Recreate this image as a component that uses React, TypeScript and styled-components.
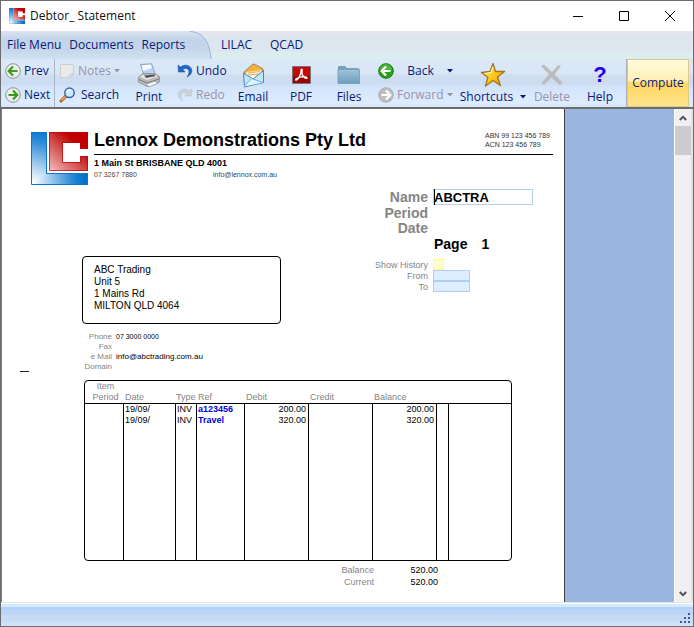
import React from "react";
import styled, { createGlobalStyle, css } from "styled-components";

const GlobalStyle = createGlobalStyle`
  *, *::before, *::after { box-sizing: border-box; }
  body { margin: 0; }
  button, input { font: inherit; color: inherit; margin: 0; padding: 0; border: 0; background: none; }
  svg { display: block; flex: none; }
`;

const ink = "#0a1a78";
const faded = "#9c93aa";
const label = "#858585";
const docFont = `"Liberation Sans", Arial, sans-serif`;

const Window = styled.div`
  display: flex;
  flex-direction: column;
  height: 100vh;
  border: 1px solid #6a6c70;
  background: #fff;
  color: ${ink};
  font: 12px/16px "Open Sans", "Noto Sans", sans-serif;
  overflow: hidden;
`;

const TitleBar = styled.header`
  display: flex;
  align-items: center;
  height: 30px;
  flex: none;
  padding-left: 8px;
  gap: 5px;
  color: #111;
`;

const WindowTitle = styled.h1`
  flex: 1;
  margin: 0;
  font-size: 12px;
  font-weight: 400;
`;

const CaptionButtons = styled.div`
  display: flex;
`;

const CaptionButton = styled.button`
  display: grid;
  place-items: center;
  width: 46px;
  height: 30px;
`;

const MenuBar = styled.nav`
  display: flex;
  height: 28px;
  flex: none;
  background: linear-gradient(#e4e6ef 0 6px, #dde5ef 7px 20px, #dbedee 22px);
`;

const ActiveTab = styled.div`
  display: flex;
  align-items: center;
  gap: 8px;
  padding-left: 6px;
  width: 189px;
  background: linear-gradient(#dce4f0, #c3d4e9 8px, #c5d6ea 18px, #d0e1f2);
`;

const OtherTabs = styled.div`
  display: flex;
  align-items: center;
  gap: 18px;
  padding-left: 9px;
`;

const MenuItem = styled.button`
  white-space: nowrap;
`;

const Toolbar = styled.div`
  display: flex;
  height: 48px;
  flex: none;
  background: linear-gradient(#dce8f8, #d8e6f6 14px, #cfddf0 17px, #ccdcf0 24px, #d3e4fb 28px, #ddecff 44px, #d5e6fa);
`;

const Stack = styled.div<{ $width: number; $inset?: number; $divided?: boolean }>`
  display: flex;
  flex-direction: column;
  flex: none;
  width: ${(p) => p.$width}px;
  padding-left: ${(p) => p.$inset ?? 4}px;
  ${(p) => p.$divided && css`border-right: 1px solid #a9b6ca;`}
`;

const RowButton = styled.button`
  display: flex;
  align-items: center;
  gap: 3px;
  height: 24px;
  white-space: nowrap;
  &:disabled { color: ${faded}; }
`;

const Caption = styled.span<{ $width: number }>`
  min-width: ${(p) => p.$width}px;
  text-align: center;
`;

const TallButton = styled.button<{ $width: number }>`
  display: flex;
  flex-direction: column;
  align-items: center;
  justify-content: space-between;
  flex: none;
  width: ${(p) => p.$width}px;
  padding: 3px 0 2px;
  white-space: nowrap;
  &:disabled { color: ${faded}; }
`;

const WithArrow = styled.span`
  display: flex;
  align-items: center;
  gap: 7px;
`;

const Compute = styled.button`
  margin-left: auto;
  margin-right: 4px;
  width: 62px;
  border: 1px solid #dcc98a;
  box-shadow: -1px 0 #a9b0bc;
  background: linear-gradient(#fffbdc, #fff0b4 21px, #ffd65e 23px, #ffe48c);
`;

const Workspace = styled.main`
  display: flex;
  flex: 1;
  min-height: 0;
  border-top: 2px solid #6d6d6d;
  border-left: 1px solid #77797c;
  background: #99b6e0;
`;

const Paper = styled.article`
  flex: 0 1 563px;
  border-right: 1px solid #404040;
  background: #fff;
  color: #000;
  font: 9px/11px ${docFont};
  overflow: hidden;
`;

const Letterhead = styled.section`
  display: flex;
  gap: 6px;
  margin: 22px 11px 0 29px;
`;

const LogoSlot = styled.div`
  padding-top: 1px;
`;

const LetterText = styled.div`
  flex: 1;
`;

const CompanyLine = styled.div`
  display: flex;
  justify-content: space-between;
  height: 24px;
  border-bottom: 1px solid #000;
`;

const Company = styled.h2`
  margin: 0;
  font-size: 18px;
  line-height: 18px;
  font-weight: 700;
  white-space: nowrap;
`;

const Registration = styled.p`
  margin: 0;
  width: 68px;
  font-size: 7px;
  line-height: 9px;
  color: #333;
  white-space: nowrap;
`;

const Street = styled.p`
  margin: 0;
  font-size: 9px;
  line-height: 16px;
  font-weight: 700;
`;

const SmallPair = styled.div`
  display: grid;
  grid-template-columns: 119px auto;
  font-size: 7px;
  line-height: 8px;
`;

const SmallNumber = styled.span`
  color: #5c4026;
`;

const MailLink = styled.a`
  color: #284b68;
  text-decoration: none;
`;

const Details = styled.section`
  display: grid;
  grid-template-columns: 199px 1fr;
  margin: 4px 0 0 80px;
`;

const AddressBox = styled.address`
  height: 68px;
  margin-top: 67px;
  padding: 7px 11px;
  border: 1px solid #000;
  border-radius: 4px;
  font-size: 10px;
  line-height: 12px;
  font-style: normal;
`;

const Fields = styled.div`
  display: grid;
  grid-template-columns: 147px 1fr;
  grid-template-rows: 16px 15px 16px 15px 8px repeat(3, 11px);
  column-gap: 5px;
  align-content: start;
`;

const BigLabel = styled.label`
  text-align: right;
  font-size: 14px;
  line-height: 17px;
  font-weight: 700;
  color: ${label};
`;

const SmallLabel = styled.label`
  text-align: right;
  line-height: 12px;
  color: ${label};
`;

const NameCell = styled.div`
  position: relative;
  width: 100px;
`;

const NameInput = styled.input`
  display: block;
  width: 100%;
  height: 16px;
  border: 1px solid #b4cdf5;
  font-size: 13px;
  line-height: 14px;
  font-weight: 700;
`;

const Caret = styled.span`
  position: absolute;
  left: 1px;
  top: 0;
  width: 1px;
  height: 16px;
  background: #000;
`;

const PageNumber = styled.div`
  grid-column: 2;
  display: flex;
  gap: 14px;
  padding-left: 1px;
  font-size: 14px;
  line-height: 16px;
  font-weight: 700;
`;

const Gap = styled.div`
  grid-column: 1 / -1;
`;

const HistoryBox = styled.input`
  appearance: none;
  width: 11px;
  height: 11px;
  border: 1px solid #ffff80;
  background: #ffffcc;
`;

const DateInput = styled.input`
  width: 37px;
  height: 11px;
  border: 1px solid #b0cdf8;
  background: #dceeff;
`;

const ContactRow = styled.section`
  display: flex;
  margin: 8px 0 0 18px;
`;

const FoldMark = styled.div`
  width: 9px;
  height: 1px;
  margin-top: 39px;
  background: #222;
`;

const ContactList = styled.dl`
  display: grid;
  grid-template-columns: 83px auto;
  grid-auto-rows: 10px;
  column-gap: 4px;
  margin: 0;
  font-size: 8px;
  line-height: 10px;
`;

const Term = styled.dt`
  text-align: right;
  color: ${label};
`;

const Value = styled.dd<{ $small?: boolean }>`
  margin: 0;
  font-size: ${(p) => (p.$small ? 7 : 8)}px;
`;

const Ledger = styled.div`
  margin: 8px 52px 0 82px;
  border: 1px solid #000;
  border-radius: 4px;
  overflow: hidden;
`;

const Table = styled.table`
  width: 100%;
  height: 179px;
  table-layout: fixed;
  border-spacing: 0;
  th, td { padding: 0 2px 0 1px; white-space: nowrap; vertical-align: top; line-height: 11px; }
  td + td { border-left: 1px solid #000; }
`;

const Head = styled.th<{ $center?: boolean }>`
  height: 23px;
  border-bottom: 1px solid #000;
  && { vertical-align: bottom; }
  text-align: ${(p) => (p.$center ? "center" : "left")};
  font-weight: 400;
  color: ${label};
`;

const HeadText = styled.span`
  padding-left: 1px;
`;

const FirstHeadText = styled.span`
  display: block;
  padding-left: 4px;
`;

const Cell = styled.td<{ $numeric?: boolean }>`
  height: 11px;
  text-align: ${(p) => (p.$numeric ? "right" : "left")};
`;

const RefLink = styled.a`
  color: #0000dc;
  font-weight: 700;
  text-decoration: none;
`;

const Totals = styled.dl`
  display: grid;
  grid-template-columns: 372px 64px;
  margin: 3px 0 0;
  line-height: 12px;
`;

const Total = styled.dd`
  margin: 0;
  text-align: right;
`;

const Scrollbar = styled.div`
  display: flex;
  flex-direction: column;
  width: 19px;
  margin-left: auto;
  border-left: 1px solid #fff;
  border-right: 2px solid #e3e3e3;
  background: #f0f0f0;
`;

const ScrollButton = styled.button`
  display: grid;
  place-items: center;
  height: 17px;
`;

const Thumb = styled.div`
  height: 29px;
  background: #cdcdcd;
`;

const Track = styled.div`
  flex: 1;
`;

const StatusBar = styled.footer`
  display: flex;
  justify-content: flex-end;
  align-items: flex-end;
  height: 24px;
  flex: none;
  border-top: 1px solid #e3e3e3;
  padding: 0 1px 1px;
  background: linear-gradient(#fff 0 1px, #d4e8ff 1px 4px, #b4d3f8 4px 7px, #bdd4f6 7px 12px, #c6dcf6 12px 17px, #d2e6f8);
`;

const Emblem = ({ width, height }: { width: number; height: number }) => (
  <svg width={width} height={height} viewBox="0 0 57 53" preserveAspectRatio="none" aria-hidden="true">
    <defs>
      <linearGradient id={`blueV${width}`} gradientUnits="userSpaceOnUse" x1="0" y1="50" x2="14" y2="0">
        <stop offset="0" stopColor="#fff" />
        <stop offset=".8" stopColor="#2a8ad8" />
        <stop offset="1" stopColor="#0876cf" />
      </linearGradient>
      <linearGradient id={`blueH${width}`} gradientUnits="userSpaceOnUse" x1="2" y1="50" x2="54" y2="44">
        <stop offset="0" stopColor="#fff" />
        <stop offset=".8" stopColor="#1d82d4" />
        <stop offset="1" stopColor="#0070cc" />
      </linearGradient>
      <linearGradient id={`red${width}`} x1="0" y1="1" x2=".8" y2=".1">
        <stop offset="0" stopColor="#f4c0c0" />
        <stop offset=".5" stopColor="#d35050" />
        <stop offset=".85" stopColor="#c00000" />
      </linearGradient>
    </defs>
    <path d="M0 0H16V41L0 53Z" fill={`url(#blueV${width})`} />
    <path d="M0 53L15.500 41H57V53Z" fill={`url(#blueH${width})`} />
    <path d="M.5.5H15.500V41.500H56.500V52.500H.5Z" fill="none" stroke="#0876cf" />
    <path d="M18 0H57V17H49V11H32V30H49V24H57V39H18Z" fill={`url(#red${width})`} />
    <path d="M18.500 .5H56.500V16.500H50V10.500H31.500V30.500H50V24.500H56.500V38.500H18.500Z" fill="none" stroke="#c00000" strokeOpacity=".7" />
  </svg>
);

const Disc = ({ kind }: { kind: "prev" | "next" | "back" | "forward" }) => {
  const solid = kind === "back" || kind === "forward";
  const flip = kind === "next" || kind === "forward";
  const fill = kind === "back" ? "#2ca01c" : kind === "forward" ? "#bdbdbd" : "#eceeee";
  const edge = kind === "back" ? "#16780e" : kind === "forward" ? "#adadad" : "#8e9494";
  return (
    <svg width="16" height="16" viewBox="0 0 16 16" aria-hidden="true">
      <circle cx="8" cy="8" r="7.300" fill={fill} stroke={edge} />
      {kind === "back" && <path d="M2 7a6 6 0 0 1 12 0Z" fill="#6cc850" opacity=".55" />}
      <g transform={flip ? "matrix(-1 0 0 1 16 0)" : undefined}>
        <path d="M8 3.500L3.700 8L8 12.500M4 8H12.500" fill="none" stroke={solid ? "#fff" : "#3d9a1c"} strokeWidth="2.200" />
      </g>
    </svg>
  );
};

const Arrow = ({ dim }: { dim?: boolean }) => (
  <svg width="6" height="4" viewBox="0 0 6 4" aria-hidden="true">
    <path d="M0 0H6L3 3.500Z" fill={dim ? faded : ink} />
  </svg>
);

const NoteIcon = () => (
  <svg width="16" height="16" viewBox="0 0 16 16" aria-hidden="true">
    <path d="M1.500 1.500H14.500V11L11 14.500H1.500Z" fill="#e9e9ea" stroke="#cfcfd2" />
    <path d="M14.500 11H11V14.500Z" fill="#f8f8f8" stroke="#c4c4c8" />
  </svg>
);

const SearchIcon = () => (
  <svg width="17" height="16" viewBox="0 0 17 16" aria-hidden="true">
    <path d="M7 9L2 14" stroke="#b87530" strokeWidth="3.200" strokeLinecap="round" />
    <path d="M7 9L2.500 13" stroke="#f0b060" strokeWidth="1.200" />
    <circle cx="10.500" cy="5.800" r="4.700" fill="#c6ecff" stroke="#3d62b0" strokeWidth="1.500" />
    <path d="M8 6Q8 3.300 11 3.200" fill="none" stroke="#fff" strokeWidth="1.500" />
  </svg>
);

const TurnIcon = ({ redo }: { redo?: boolean }) => (
  <svg width="16" height="16" viewBox="0 0 16 16" aria-hidden="true">
    <g transform={redo ? "matrix(-1 0 0 1 16 0)" : undefined} opacity={redo ? 0.8 : 1}>
      <path d="M1 2L1.500 9H8L5.800 6.500C8.500 4.500 11.500 5.500 12 8C12.300 10 11.500 12 10 14C14 12 15.500 9 14.500 6C13 2 7.500 1 3.500 4Z" fill={redo ? "#c7ccd2" : "#2368c8"} stroke={redo ? "#b8bec5" : "#1653ac"} strokeWidth=".6" />
    </g>
  </svg>
);

const PrintIcon = () => (
  <svg width="24" height="25" viewBox="0 0 24 25" aria-hidden="true">
    <path d="M3.500 1.500L14.500 .8L18.500 12H7Z" fill="#b9d4fa" stroke="#7b8fb0" strokeWidth=".8" />
    <path d="M4.500 2.300L13.800 1.600L15 5L6 8Z" fill="#f4faff" />
    <path d="M1.500 14L6 10.500H18L22.500 13.500V19L10 23.500L1.500 19Z" fill="#bdbdbd" stroke="#8b8b8b" strokeWidth=".8" />
    <path d="M2 14L6.500 11L8 13.500H17L17.500 11L22 13.500L10 17.500Z" fill="#e4e4e4" stroke="#999" strokeWidth=".5" />
    <path d="M7.500 12.500L17.500 11.500L18.500 13L9 15Z" fill="#545454" />
    <path d="M2 16.500L10 20L22 16" fill="none" stroke="#666" strokeWidth=".8" />
    <path d="M9 21L18 18L21 20L12 24Z" fill="#f8f8f8" stroke="#888" strokeWidth=".7" />
  </svg>
);

const EmailIcon = () => (
  <svg width="23" height="25" viewBox="0 0 23 25" aria-hidden="true">
    <path d="M2 9L11 1Q13 1 21 6L20.500 13L4 14Z" fill="#f5b13e" stroke="#a88248" />
    <path d="M4 9L19.500 7V15L4 17Z" fill="#fff7df" stroke="#e9bc62" strokeWidth=".5" />
    <path d="M6 10L18 8.500M6 12L17 11" stroke="#e4ad5b" />
    <path d="M1.500 10L11 16L21.500 7.500V19.500L2.500 24Z" fill="#bce7fc" stroke="#5e7ab0" />
    <path d="M2 23.500L9.500 15.500L21 19.500" fill="#d9f4ff" stroke="#62b0dd" />
  </svg>
);

const PdfIcon = () => (
  <svg width="19" height="18" viewBox="0 0 19 18" aria-hidden="true">
    <path d="M.5.5H18.500V17.500H.5Z" fill="#c80808" stroke="#777" />
    <path d="M1 10H18V17H1Z" fill="#9c0505" />
    <path d="M4 14C6 14 9.500 8 9 4.500C9 2.500 11 3 10 6C9.500 10 13 13 15 12.200C16 10 9 10 4.500 12.500C3.500 13 3.500 14 4 14" fill="none" stroke="#fff" strokeWidth="1.300" />
  </svg>
);

const FolderIcon = () => (
  <svg width="24" height="20" viewBox="0 0 24 20" aria-hidden="true">
    <defs>
      <linearGradient id="folder" x1="0" y1="0" x2="0" y2="1">
        <stop offset="0" stopColor="#a1c4da" />
        <stop offset="1" stopColor="#6a9dbd" />
      </linearGradient>
    </defs>
    <path d="M1 2Q1 1 2 1H8L10 3H21.500L22 5H1Z" fill="#7d9fb5" />
    <path d="M1 4.500H22.500V18.500H1Z" fill="url(#folder)" stroke="#7ba4bf" />
  </svg>
);

const StarIcon = () => (
  <svg width="26" height="26" viewBox="0 0 26 26" aria-hidden="true">
    <defs>
      <linearGradient id="star" x1="0" y1="0" x2="1" y2="1">
        <stop offset="0" stopColor="#fff07c" />
        <stop offset=".55" stopColor="#fcc51b" />
        <stop offset="1" stopColor="#e38a00" />
      </linearGradient>
    </defs>
    <path d="M13 1.500L15.500 9.500L24.500 9.500L17.500 15L20.500 23.500L13 18.500L5.500 24L7.800 15.300L1.500 10.500L10 9.500Z" fill="url(#star)" stroke="#a5741c" strokeWidth="1.300" strokeLinejoin="round" />
    <path d="M12.800 4.500L11 10.500L4.500 11.500" fill="none" stroke="#fffbd0" />
  </svg>
);

const DeleteIcon = () => (
  <svg width="24" height="24" viewBox="0 0 24 24" aria-hidden="true">
    <path d="M1 3L4 1.500L12 9L18.500 2L21 3L14.500 11.500L22.500 19.500L20 22.500L11.500 14.500L4 22L1.500 20L9 11.500Z" fill="#bcbcbc" />
  </svg>
);

const HelpMark = styled.span`
  font: 700 22px/26px ${docFont};
  color: #2000f0;
`;

const IconSlot = styled.span`
  display: grid;
  place-items: center;
  height: 26px;
`;

const Chevron = ({ down }: { down?: boolean }) => (
  <svg width="8" height="6" viewBox="0 0 8 6" aria-hidden="true">
    <path d={down ? "M.8 1L4 4.200L7.200 1" : "M.8 5L4 1.800L7.200 5"} fill="none" stroke="#505050" strokeWidth="1.900" />
  </svg>
);

const entries = [
  { date: "19/09/", type: "INV", ref: "a123456", debit: "200.00", balance: "200.00" },
  { date: "19/09/", type: "INV", ref: "Travel", debit: "320.00", balance: "320.00" },
];
const columns = [38, 52, 21, 48, 64, 64, 64, 12];

export default function App() {
  return (
    <>
      <GlobalStyle />
      <Window>
        <TitleBar>
          <Emblem width={16} height={16} />
          <WindowTitle>Debtor_ Statement</WindowTitle>
          <CaptionButtons>
            <CaptionButton aria-label="Minimize">
              <svg width="10" height="10"><path d="M0 5.500H10" stroke="#000" /></svg>
            </CaptionButton>
            <CaptionButton aria-label="Maximize">
              <svg width="10" height="10"><path d="M.5.5H9.500V9.500H.5Z" fill="none" stroke="#000" /></svg>
            </CaptionButton>
            <CaptionButton aria-label="Close">
              <svg width="10" height="10"><path d="M0 0L10 10M10 0L0 10" stroke="#000" /></svg>
            </CaptionButton>
          </CaptionButtons>
        </TitleBar>

        <MenuBar>
          <ActiveTab>
            <MenuItem>File Menu</MenuItem>
            <MenuItem>Documents</MenuItem>
            <MenuItem>Reports</MenuItem>
          </ActiveTab>
          <svg width="22" height="28" viewBox="0 0 22 28" aria-hidden="true">
            <defs>
              <linearGradient id="tab" x1="0" y1="0" x2="0" y2="1">
                <stop offset="0" stopColor="#dce4f0" />
                <stop offset=".29" stopColor="#c3d4e9" />
                <stop offset=".64" stopColor="#c5d6ea" />
                <stop offset="1" stopColor="#d0e1f2" />
              </linearGradient>
            </defs>
            <path d="M0 0C12 1 20 10 21 28H0Z" fill="url(#tab)" />
            <path d="M0 .5C12 1 20 10 21 28" fill="none" stroke="#94b5e0" />
          </svg>
          <OtherTabs>
            <MenuItem>LILAC</MenuItem>
            <MenuItem>QCAD</MenuItem>
          </OtherTabs>
        </MenuBar>

        <Toolbar>
          <Stack $width={54} $divided>
            <RowButton><Disc kind="prev" />Prev</RowButton>
            <RowButton><Disc kind="next" />Next</RowButton>
          </Stack>
          <Stack $width={77}>
            <RowButton disabled><NoteIcon />Notes<Arrow dim /></RowButton>
            <RowButton><SearchIcon /><Caption $width={42}>Search</Caption></RowButton>
          </Stack>
          <TallButton $width={34}><IconSlot><PrintIcon /></IconSlot>Print</TallButton>
          <Stack $width={68} $inset={11}>
            <RowButton><TurnIcon />Undo</RowButton>
            <RowButton disabled><TurnIcon redo />Redo</RowButton>
          </Stack>
          <TallButton $width={38}><IconSlot><EmailIcon /></IconSlot>Email</TallButton>
          <TallButton $width={58}><IconSlot><PdfIcon /></IconSlot>PDF</TallButton>
          <TallButton $width={38}><IconSlot><FolderIcon /></IconSlot>Files</TallButton>
          <Stack $width={90} $inset={10}>
            <RowButton><Disc kind="back" /><Caption $width={47}>Back</Caption><Arrow /></RowButton>
            <RowButton disabled><Disc kind="forward" />Forward<Arrow dim /></RowButton>
          </Stack>
          <TallButton $width={70}>
            <IconSlot><StarIcon /></IconSlot>
            <WithArrow>Shortcuts<Arrow /></WithArrow>
          </TallButton>
          <TallButton $width={48} disabled><IconSlot><DeleteIcon /></IconSlot>Delete</TallButton>
          <TallButton $width={48}><HelpMark>?</HelpMark>Help</TallButton>
          <Compute>Compute</Compute>
        </Toolbar>

        <Workspace>
          <Paper>
            <Letterhead>
              <LogoSlot><Emblem width={57} height={53} /></LogoSlot>
              <LetterText>
                <CompanyLine>
                  <Company>Lennox Demonstrations Pty Ltd</Company>
                  <Registration>ABN 99 123 456 789<br />ACN 123 456 789</Registration>
                </CompanyLine>
                <Street>1 Main St BRISBANE QLD 4001</Street>
                <SmallPair>
                  <SmallNumber>07 3267 7880</SmallNumber>
                  <MailLink href="mailto:info@lennox.com.au">info@lennox.com.au</MailLink>
                </SmallPair>
              </LetterText>
            </Letterhead>

            <Details>
              <AddressBox>ABC Trading<br />Unit 5<br />1 Mains Rd<br />MILTON QLD 4064</AddressBox>
              <Fields>
                <BigLabel htmlFor="name">Name</BigLabel>
                <NameCell>
                  <NameInput id="name" defaultValue="ABCTRA" />
                  <Caret />
                </NameCell>
                <BigLabel as="span">Period</BigLabel><span />
                <BigLabel as="span">Date</BigLabel><span />
                <PageNumber><span>Page</span><span>1</span></PageNumber>
                <Gap />
                <SmallLabel htmlFor="history">Show History</SmallLabel>
                <HistoryBox id="history" type="checkbox" />
                <SmallLabel htmlFor="from">From</SmallLabel>
                <DateInput id="from" />
                <SmallLabel htmlFor="to">To</SmallLabel>
                <DateInput id="to" />
              </Fields>
            </Details>

            <ContactRow>
              <FoldMark />
              <ContactList>
                <Term>Phone</Term><Value $small>07 3000 0000</Value>
                <Term>Fax</Term><Value />
                <Term>e Mail</Term><Value>info@abctrading.com.au</Value>
                <Term>Domain</Term><Value />
              </ContactList>
            </ContactRow>

            <Ledger>
              <Table>
                <colgroup>
                  {columns.map((width, i) => <col key={i} width={width} />)}
                  <col />
                </colgroup>
                <thead>
                  <tr>
                    <Head $center><FirstHeadText>Item<br />Period</FirstHeadText></Head>
                    <Head><HeadText>Date</HeadText></Head>
                    <Head>Type</Head>
                    <Head><HeadText>Ref</HeadText></Head>
                    <Head><HeadText>Debit</HeadText></Head>
                    <Head><HeadText>Credit</HeadText></Head>
                    <Head><HeadText>Balance</HeadText></Head>
                    <Head />
                    <Head />
                  </tr>
                </thead>
                <tbody>
                  {entries.map((e) => (
                    <tr key={e.ref}>
                      <Cell />
                      <Cell>{e.date}</Cell>
                      <Cell>{e.type}</Cell>
                      <Cell><RefLink href="#">{e.ref}</RefLink></Cell>
                      <Cell $numeric>{e.debit}</Cell>
                      <Cell />
                      <Cell $numeric>{e.balance}</Cell>
                      <Cell />
                      <Cell />
                    </tr>
                  ))}
                  <tr>
                    {[...columns, 0].map((_, i) => <td key={i} />)}
                  </tr>
                </tbody>
              </Table>
            </Ledger>

            <Totals>
              <SmallLabel as="dt">Balance</SmallLabel><Total>520.00</Total>
              <SmallLabel as="dt">Current</SmallLabel><Total>520.00</Total>
            </Totals>
          </Paper>
          <Scrollbar>
            <ScrollButton aria-label="Scroll up"><Chevron /></ScrollButton>
            <Thumb />
            <Track />
            <ScrollButton aria-label="Scroll down"><Chevron down /></ScrollButton>
          </Scrollbar>
        </Workspace>

        <StatusBar>
          <svg width="12" height="12" viewBox="0 0 12 12" aria-hidden="true">
            <path d="M8 0h2v2h-2zM4 4h2v2h-2zM8 4h2v2h-2zM0 8h2v2h-2zM4 8h2v2h-2zM8 8h2v2h-2z" fill="#42588f" />
          </svg>
        </StatusBar>
      </Window>
    </>
  );
}
